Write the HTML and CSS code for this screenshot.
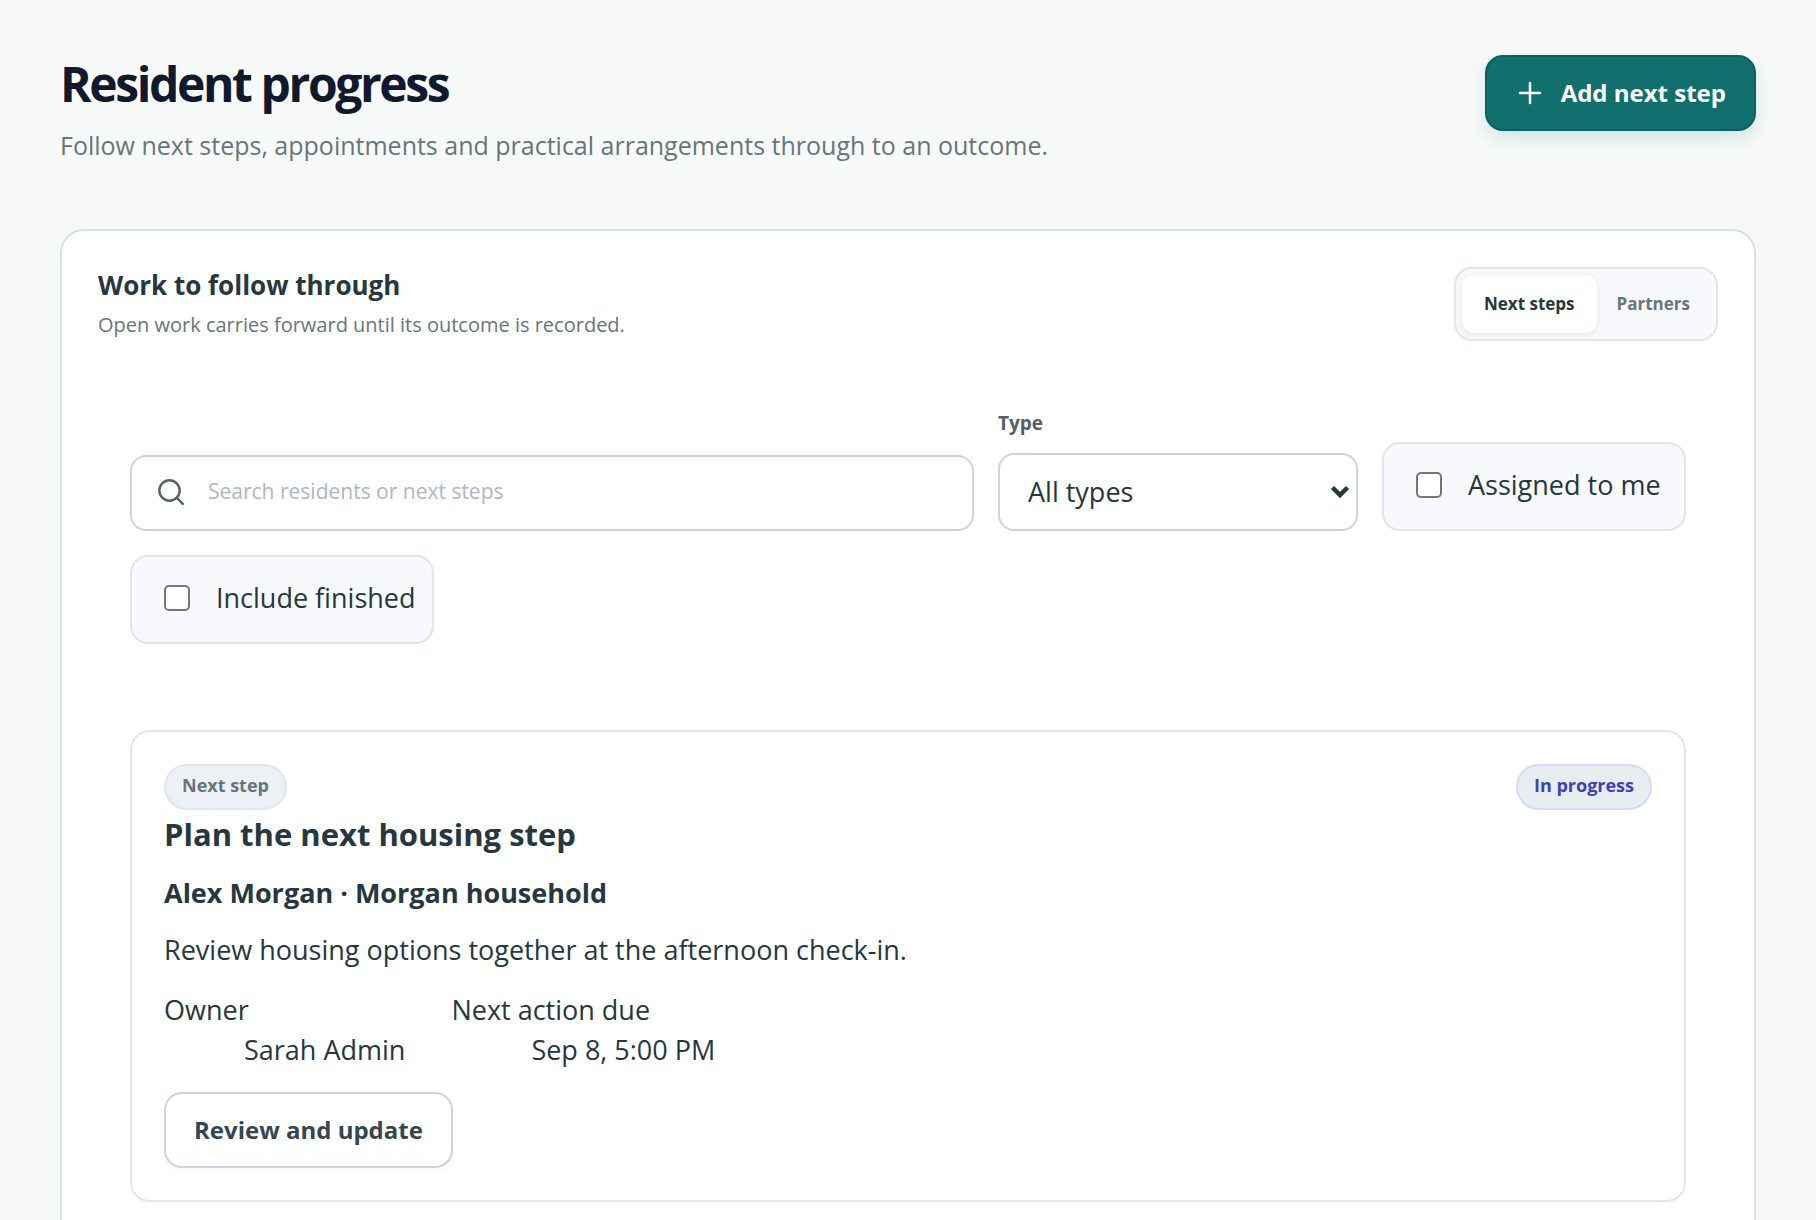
FILE: index.html
```html
<!DOCTYPE html>
<html lang="en">
<head>
  <meta charset="UTF-8">
  <meta name="viewport" content="width=device-width, initial-scale=1.0">
  <title>Resident progress</title>
  <link rel="stylesheet" href="styles.css">
</head>
<body>
  <main class="page">
    <header class="page-header">
      <div>
        <h1>Resident progress</h1>
        <p class="lead">Follow next steps, appointments and practical arrangements through to an outcome.</p>
      </div>
      <button type="button" class="btn btn-primary">
        <svg width="30" height="30" viewBox="0 0 30 30" aria-hidden="true">
          <path d="M15 5v20M5 15h20"/>
        </svg>
        Add next step
      </button>
    </header>

    <section class="panel">
      <div class="panel-header">
        <div>
          <h2>Work to follow through</h2>
          <p>Open work carries forward until its outcome is recorded.</p>
        </div>
        <div class="tabs">
          <button type="button" class="tab active">Next steps</button>
          <button type="button" class="tab">Partners</button>
        </div>
      </div>

      <form class="filters">
        <label class="search">
          <svg width="30" height="30" viewBox="0 0 30 30" aria-hidden="true">
            <circle cx="13.5" cy="12.5" r="10.2"/>
            <path d="M20.8 19.8l6 6"/>
          </svg>
          <input type="search" placeholder="Search residents or next steps" aria-label="Search residents or next steps">
        </label>

        <div class="field">
          <label for="type">Type</label>
          <div class="select">
            <select id="type">
              <option>All types</option>
            </select>
            <svg width="20" height="14" viewBox="0 0 20 14" aria-hidden="true">
              <path d="M2.5 2.5l7.5 7.5 7.5-7.5"/>
            </svg>
          </div>
        </div>

        <label class="check"><input type="checkbox"> Assigned to me</label>
        <label class="check"><input type="checkbox"> Include finished</label>
      </form>

      <div class="list">
        <article class="step">
          <div class="step-top">
            <span class="badge">Next step</span>
            <span class="badge badge-progress">In progress</span>
          </div>
          <h3>Plan the next housing step</h3>
          <p class="person">Alex Morgan · Morgan household</p>
          <p class="note">Review housing options together at the afternoon check-in.</p>
          <dl class="facts">
            <div>
              <dt>Owner</dt>
              <dd>Sarah Admin</dd>
            </div>
            <div>
              <dt>Next action due</dt>
              <dd>Sep 8, 5:00 PM</dd>
            </div>
          </dl>
          <button type="button" class="btn btn-secondary">Review and update</button>
        </article>
      </div>
    </section>
  </main>
</body>
</html>
```
FILE: styles.css
```css
* {
  box-sizing: border-box;
}

body {
  margin: 0;
  background: #f8faf9;
  color: #263740;
  font-family: "Segoe UI", "Open Sans", sans-serif;
  font-size: 27px;
  line-height: 40px;
}

h1, h2, h3, p, dl {
  margin: 0;
}

button, input, select {
  font: inherit;
  color: inherit;
}

svg {
  flex: none;
  fill: none;
  stroke: currentColor;
  stroke-linecap: round;
}

.page {
  padding: 55px 60px;
}

.page-header {
  display: flex;
  justify-content: space-between;
  align-items: flex-start;
  gap: 32px;
  margin-bottom: 64px;
}

h1 {
  color: #10192d;
  font-size: 48px;
  font-weight: 700;
  line-height: 58px;
  letter-spacing: -0.05em;
}

.lead {
  margin-top: 12px;
  color: #66757d;
  font-size: 25px;
}

.btn {
  display: inline-flex;
  align-items: center;
  gap: 16px;
  height: 76px;
  padding: 0 28px;
  border: 2px solid #cdd4e0;
  border-radius: 18px;
  background: #fff;
  font-size: 24px;
  font-weight: 700;
  white-space: nowrap;
  cursor: pointer;
}

.btn-primary {
  border-color: #0c615e;
  background: #11706d;
  color: #fff;
  box-shadow: 0 8px 20px rgba(17, 112, 109, 0.16);
}

.btn-primary svg {
  stroke-width: 2.5;
}

.btn-secondary {
  color: #344750;
  box-shadow: 0 2px 4px rgba(16, 25, 45, 0.04);
}

.panel {
  padding: 36px;
  border: 2px solid #d7e2e2;
  border-radius: 24px;
  background: #fff;
  box-shadow: 0 4px 24px rgba(16, 25, 45, 0.03);
}

.panel-header {
  display: flex;
  justify-content: space-between;
  align-items: flex-start;
  gap: 32px;
}

h2 {
  font-size: 26px;
  font-weight: 700;
  line-height: 36px;
}

.panel-header p {
  margin-top: 6px;
  color: #66757d;
  font-size: 20px;
  line-height: 32px;
}

.tabs {
  display: flex;
  padding: 6px;
  border: 2px solid #e1e6ec;
  border-radius: 18px;
  background: #f8f9fd;
}

.tab {
  height: 58px;
  padding: 0 20px;
  border: 0;
  border-radius: 12px;
  background: none;
  color: #66757d;
  font-size: 17px;
  font-weight: 700;
  cursor: pointer;
}

.tab.active {
  padding: 0 22px;
  background: #fff;
  color: #263740;
  box-shadow: 0 2px 6px rgba(16, 25, 45, 0.08);
}

.filters {
  display: flex;
  flex-wrap: wrap;
  align-items: flex-end;
  gap: 24px;
  margin-top: 36px;
  padding: 32px 32px 30px;
}

.search {
  display: flex;
  flex: 1 1 600px;
  align-items: center;
  gap: 22px;
  height: 76px;
  padding: 0 24px;
  border: 2px solid #cdd4e0;
  border-radius: 16px;
  background: #fff;
}

.search svg {
  color: #526169;
  stroke-width: 2.4;
}

.search input {
  flex: 1;
  min-width: 0;
  padding: 0 0 4px;
  border: 0;
  outline: 0;
  background: none;
  font-size: 21px;
}

.search input::placeholder {
  color: #adb6c7;
}

.field {
  display: flex;
  flex: 0 0 360px;
  flex-direction: column;
  gap: 16px;
}

.field label {
  color: #526169;
  font-size: 19px;
  font-weight: 700;
  line-height: 28px;
}

.select {
  position: relative;
}

.select select {
  display: block;
  width: 100%;
  height: 78px;
  padding: 0 48px 0 28px;
  border: 2px solid #cdd4e0;
  border-radius: 16px;
  background: #fff;
  appearance: none;
}

.select svg {
  position: absolute;
  top: 32px;
  right: 8px;
  stroke-width: 4.5;
  stroke-linecap: butt;
  pointer-events: none;
}

.check {
  display: flex;
  flex: 0 0 304px;
  align-items: center;
  gap: 26px;
  padding: 21px 0 24px 32px;
  border: 2px solid #e1e6ec;
  border-radius: 18px;
  background: #f8f9fd;
  white-space: nowrap;
}

.check input {
  width: 26px;
  height: 26px;
  margin: 0;
  border: 2px solid #767676;
  border-radius: 5px;
  background: #fff;
  appearance: none;
}

.check input:checked {
  border-color: #11706d;
  background: #11706d;
}

.list {
  padding: 24px 32px 32px;
  margin-top: 32px;
}

.step {
  padding: 32px;
  border: 2px solid #e1e6ec;
  border-radius: 20px;
}

.step-top {
  display: flex;
  justify-content: space-between;
}

.badge {
  padding: 5px 16px 9px;
  border: 2px solid #e1e6ec;
  border-radius: 24px;
  background: #edf1f5;
  color: #66757d;
  font-size: 18px;
  font-weight: 700;
  line-height: 28px;
}

.badge-progress {
  border-color: #d9d9fb;
  background: #e8edf1;
  color: #4040bd;
}

h3 {
  margin-top: 2px;
  font-size: 31px;
  font-weight: 700;
  line-height: 44px;
}

.person {
  margin-top: 16px;
  font-weight: 700;
  line-height: 42px;
}

.note {
  margin-top: 16px;
}

.facts {
  display: flex;
  gap: 46px;
  margin: 20px 0 22px;
}

.facts dd {
  margin-left: 80px;
}
```
